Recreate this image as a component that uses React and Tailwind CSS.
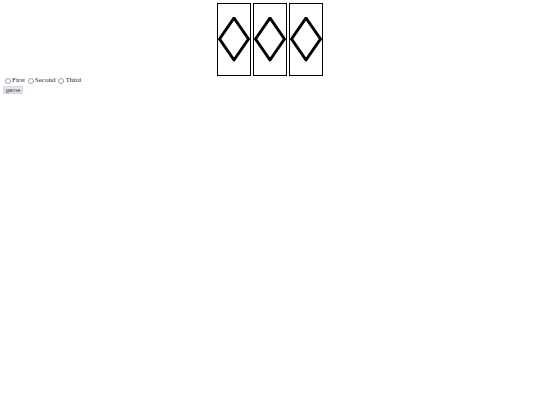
const cards = [0, 1, 2];
const options = ['First', 'Second', 'Third'];

function Card() {
  return (
    <div className="w-[34px] h-[73px] border border-black bg-white flex items-center justify-center">
      <svg width="32" height="46" viewBox="0 0 32 46">
        <polygon points="16,1 30.5,22 16,43 1.5,22" fill="none" stroke="black" strokeWidth="3" strokeLinejoin="round" />
      </svg>
    </div>
  );
}

export default function App() {
  return (
    <div className="bg-white min-h-[405px] w-[540px] text-black" style={{ fontFamily: '"Liberation Serif", serif' }}>
      <div className="flex justify-center gap-[2px] pt-[3px]">
        {cards.map((c) => (
          <Card key={c} />
        ))}
      </div>
      <div className="flex items-center pl-[5px] mt-[1px] h-[7px] text-[7px] leading-[7px] text-gray-800">
        {options.map((o) => (
          <label key={o} className="flex items-center mr-[3px]">
            <span className="w-[6px] h-[6px] rounded-full border border-gray-400 bg-white mr-[1px]"></span>
            {o}
          </label>
        ))}
      </div>
      <div className="flex pl-[3px] mt-[2px]">
        <button className="flex items-center justify-center h-[8px] w-[20px] text-[6px] leading-[6px] text-gray-700 bg-gray-200 border border-gray-300 rounded-[1px]" style={{ fontFamily: '"Liberation Sans", sans-serif' }}>
          game
        </button>
      </div>
    </div>
  );
}
